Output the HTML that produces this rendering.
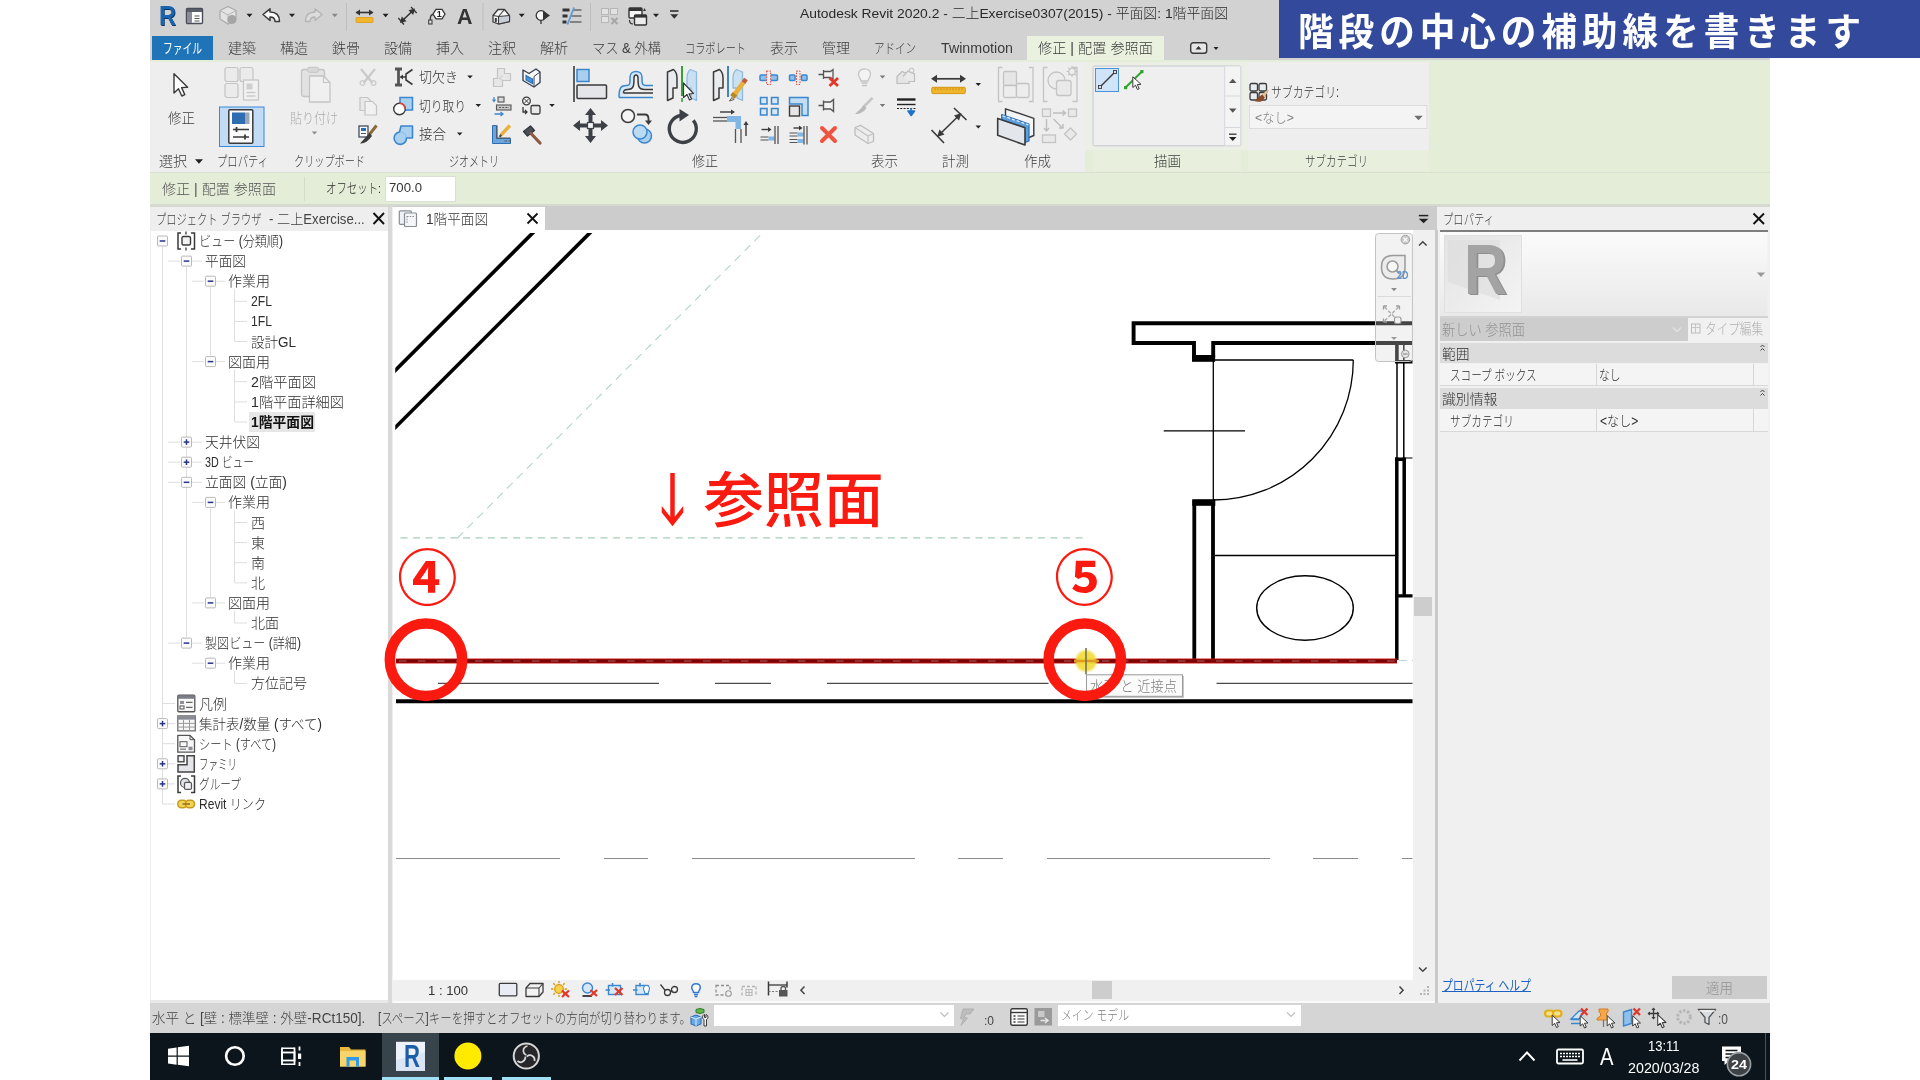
<!DOCTYPE html>
<html lang="ja"><head><meta charset="utf-8"><title>Autodesk Revit 2020.2</title>
<style>
html,body{margin:0;padding:0}
body{width:1920px;height:1080px;position:relative;overflow:hidden;background:#fff;font-family:"Liberation Sans","Noto Sans CJK JP",sans-serif;}
.r{position:absolute}
.t{position:absolute;white-space:nowrap;line-height:1;transform-origin:0 50%;color:#2b2b2b;font-weight:300}
.tl{position:absolute;left:0;top:0;width:1920px;height:1080px;will-change:transform}
.ov{position:absolute;left:0;top:0}
</style></head>
<body>
<div class="r" style="left:150px;top:0px;width:1620px;height:60px;background:#d2d2d2;"></div>
<div class="r" style="left:150px;top:60px;width:1620px;height:113px;background:#e4edd7;"></div>
<div class="r" style="left:150px;top:62px;width:935px;height:110.5px;background:#eeeeee;"></div>
<div class="r" style="left:1247.5px;top:62px;width:181.5px;height:88px;background:#eeeeee;"></div>
<div class="r" style="left:1085px;top:62px;width:162.5px;height:88px;background:#ebefe5;"></div>
<div class="r" style="left:1092.5px;top:150px;width:148.5px;height:21px;background:#e8f0dd;"></div>
<div class="r" style="left:1247.5px;top:150px;width:181.5px;height:21px;background:#e8f0dd;"></div>
<div class="r" style="left:150px;top:172px;width:1620px;height:1.5px;background:#d9dfd1;"></div>
<div class="r" style="left:150px;top:173px;width:1620px;height:32px;background:#e4edd7;"></div>
<div class="r" style="left:150px;top:204px;width:1620px;height:3px;background:#d6d9d0;"></div>
<div class="r" style="left:150px;top:206.5px;width:1620px;height:796px;background:#f0f0f0;"></div>
<div class="r" style="left:152px;top:36px;width:61px;height:24px;background:#1f74b8;"></div>
<div class="r" style="left:1027px;top:36px;width:137px;height:24px;background:#eaf1df;"></div>
<div class="r" style="left:1279px;top:0px;width:641px;height:57.5px;background:#33499b;"></div>
<div class="r" style="left:385px;top:175.5px;width:70.5px;height:26.5px;background:#ffffff;border:1px solid #dcdfd6;box-sizing:border-box;"></div>
<div class="r" style="left:304px;top:177px;width:1px;height:24px;background:#d3dcc6;"></div>
<div class="r" style="left:150px;top:206.5px;width:238.3px;height:24px;background:#eeeeee;"></div>
<div class="r" style="left:151.3px;top:230.5px;width:237px;height:770px;background:#ffffff;"></div>
<div class="r" style="left:150px;top:1000.3px;width:238.3px;height:2.7px;background:#e8e8e8;"></div>
<div class="r" style="left:388.3px;top:206.5px;width:4.2px;height:796px;background:#d9d9d9;"></div>
<div class="r" style="left:249px;top:411.96299999999997px;width:66px;height:20px;background:#e6e6e6;"></div>
<div class="r" style="left:392.5px;top:206px;width:1044.5px;height:23.5px;background:#cccccc;"></div>
<div class="r" style="left:393px;top:206.5px;width:151.5px;height:24px;background:#ffffff;"></div>
<div class="r" style="left:392.5px;top:230px;width:1020px;height:750px;background:#ffffff;"></div>
<div class="r" style="left:1412.5px;top:229.5px;width:23px;height:751px;background:#f0f0f0;"></div>
<div class="r" style="left:1414px;top:597px;width:18px;height:19px;background:#cdcdcd;"></div>
<div class="r" style="left:392.5px;top:980px;width:1043px;height:21px;background:#f0f0f0;"></div>
<div class="r" style="left:1092px;top:981px;width:20px;height:18px;background:#cdcdcd;"></div>
<div class="r" style="left:392.5px;top:1001px;width:1043px;height:2px;background:#fafafa;"></div>
<div class="r" style="left:1435.4px;top:229.5px;width:2.2px;height:773.5px;background:#c9c9c9;"></div>
<div class="r" style="left:1437.5px;top:206.5px;width:332.5px;height:796px;background:#f0f0f0;"></div>
<div class="r" style="left:1437.5px;top:206.5px;width:332.5px;height:23.5px;background:#efefef;"></div>
<div class="r" style="left:1440px;top:230px;width:327.5px;height:1.8px;background:#7e7e7e;"></div>
<div class="r" style="left:1440px;top:316px;width:327.5px;height:1.7px;background:#d2d2d2;"></div>
<div class="r" style="left:1440px;top:317.7px;width:247.7px;height:23.7px;background:#cdcdcd;"></div>
<div class="r" style="left:1687.7px;top:317.7px;width:80px;height:23.7px;background:#f1f1f1;"></div>
<div class="r" style="left:1440px;top:342.7px;width:327.5px;height:20.8px;background:#dcdcdc;"></div>
<div class="r" style="left:1440px;top:363.5px;width:327.5px;height:22.7px;background:#f4f4f4;border-bottom:1px solid #d8d8d8;box-sizing:border-box;"></div>
<div class="r" style="left:1440px;top:387.5px;width:327.5px;height:21.5px;background:#dcdcdc;"></div>
<div class="r" style="left:1440px;top:409px;width:327.5px;height:22.8px;background:#f4f4f4;border-bottom:1px solid #d8d8d8;box-sizing:border-box;"></div>
<div class="r" style="left:1596px;top:363.5px;width:1px;height:22.7px;background:#d6d6d6;"></div>
<div class="r" style="left:1596px;top:409px;width:1px;height:22.8px;background:#d6d6d6;"></div>
<div class="r" style="left:1753px;top:363.5px;width:1px;height:22.7px;background:#d6d6d6;"></div>
<div class="r" style="left:1753px;top:409px;width:1px;height:22.8px;background:#d6d6d6;"></div>
<div class="r" style="left:1672px;top:976px;width:95px;height:23px;background:#cccccc;"></div>
<div class="r" style="left:150px;top:1003px;width:1620px;height:30px;background:#d5d5d5;"></div>
<div class="r" style="left:714px;top:1005px;width:240px;height:21px;background:#ffffff;"></div>
<div class="r" style="left:1058px;top:1005px;width:243px;height:21px;background:#ffffff;"></div>
<div class="r" style="left:150px;top:1032.5px;width:1620px;height:47.5px;background:#0b151b;"></div>
<div class="r" style="left:382px;top:1032.5px;width:57px;height:47.5px;background:#37444b;"></div>
<div class="r" style="left:382px;top:1077.4px;width:57px;height:3px;background:#9fe0f5;"></div>
<div class="r" style="left:444px;top:1077.4px;width:48px;height:3px;background:#9fe0f5;"></div>
<div class="r" style="left:502px;top:1077.4px;width:49px;height:3px;background:#9fe0f5;"></div>
<div class="r" style="left:1765px;top:1033px;width:1px;height:47px;background:#46545b;"></div>
<svg class="ov" width="1920" height="1080" viewBox="0 0 1920 1080">
<defs><clipPath id="cv"><rect x="395.250" y="233" width="1017.25" height="746"/></clipPath></defs>
<g clip-path="url(#cv)" fill="none" stroke="#000">
<path d="M390 375.650 L540 225.650 M390 432.750 L600 222.750" stroke-width="3.7"/>
<path d="M457.500 538 L765 230.500" stroke="#b4d6c2" stroke-width="1.1" stroke-dasharray="8 6"/>
<path d="M400.500 537.900 H1085.500" stroke="#a6cfb6" stroke-width="1.1" stroke-dasharray="7 5.500"/>
<path d="M438 683.400 H659 M715 683.400 H771 M827 683.400 H1048.500 M1216.500 683.400 H1413" stroke="#4c4c4c" stroke-width="1.2"/>
<path d="M396 701.300 H1413" stroke-width="4"/>
<path d="M396 858.500 H560 M604 858.500 H648 M692 858.500 H915 M958 858.500 H1003 M1047 858.500 H1270 M1313 858.500 H1358 M1402 858.500 H1413" stroke="#8c8c8c" stroke-width="1.1"/>
<path d="M1413 323.300 H1133.600 V343 H1194 V358 M1213.200 358 V343 H1413" stroke-width="3.9" stroke-linejoin="miter"/>
<rect x="1192" y="355" width="23.100" height="6.800" fill="#000" stroke="none"/>
<path d="M1213.300 360 V500 M1213 360 H1353.300 M1353.300 360 A140 140 0 0 1 1213.300 500 M1163.700 430.800 H1245" stroke-width="1.3"/>
<rect x="1192.300" y="499.200" width="23" height="6.600" fill="#000" stroke="none"/>
<path d="M1194.300 500 V660 M1213 500 V660" stroke-width="3.800"/>
<path d="M1397 345 V458 M1403.800 345 V458" stroke-width="1.5"/>
<path d="M1396.900 343 V362 M1395 361.700 H1413 " stroke-width="3.600"/>
<path d="M1396.800 457.500 V660 M1404.200 457.500 V596" stroke-width="3.500"/>
<path d="M1395 459.300 H1406" stroke-width="3.600"/>
<path d="M1406 458 H1413" stroke-width="1.200"/>
<path d="M1395 595.900 H1413" stroke-width="3.400"/>
<path d="M1215 555.500 H1395" stroke-width="1.400"/>
<ellipse cx="1305" cy="608" rx="48.300" ry="32.200" stroke-width="1.400"/>
</g>
<rect x="1375.500" y="233.500" width="37" height="128" rx="3" fill="#d8d8d8" fill-opacity=".32" stroke="#c4c4c4" stroke-width="1"/>
<path d="M396 661 H1397" stroke="#d21c1c" stroke-width="5" fill="none"/>
<path d="M396 661 H1397" stroke="#7c0404" stroke-width="3.600" fill="none"/>
<path d="M399 661 H1397" stroke="#a86060" stroke-width="1.100" stroke-dasharray="7.500 11.500" fill="none"/>
<path d="M1399 660.500 H1413" stroke="#b5d5ea" stroke-width="1" stroke-dasharray="8 5" fill="none"/>
<defs><radialGradient id="yg"><stop offset="0" stop-color="#f2dc3a"/><stop offset=".72" stop-color="#f2dc3a" stop-opacity=".9"/><stop offset="1" stop-color="#f6e878" stop-opacity="0"/></radialGradient></defs>
<circle cx="1086" cy="661" r="12.500" fill="url(#yg)"/>
<path d="M1074 661 H1099" stroke="#e09a20" stroke-width="2.200" fill="none"/>
<path d="M1086 648 V674.500" stroke="#6b6b55" stroke-width="1.500" fill="none"/>
<rect x="1088" y="676" width="96" height="22" fill="#c8c8c8"/>
<rect x="1086.500" y="674.800" width="96" height="21.500" fill="#fbfbfb" stroke="#9a9a9a" stroke-width="1"/>
</svg>
<svg class="ov" width="1920" height="1080" viewBox="0 0 1920 1080" fill="none">
<g transform="translate(186 8)" ><rect x=".5" y=".5" width="16" height="15" rx="1" fill="#fdfdfd" stroke="#4a4c58" stroke-width="1.4"/><rect x="1" y="1" width="15" height="3" fill="#5a5d6a"/><rect x="1" y="4" width="5" height="11" fill="#8a8d98"/><path d="M8.500 8 h5 M8.500 10.500 h5 M8.500 13 h5" stroke="#555" stroke-width="1"/></g>
<g transform="translate(219 6)" ><path d="M9 .5 L17 4.500 V13 L9 18 L1 13 V4.500 Z" fill="#e3e3e3" stroke="#a9a9a9" stroke-width="1.200"/><path d="M1 4.500 L9 9 L17 4.500 M9 9 V18" stroke="#b5b5b5" stroke-width="1" fill="none"/><circle cx="13" cy="13.500" r="4.500" fill="#a5a5a5"/></g>
<path d="M246.5 13.75 h6 l-3.0 3.5 z" fill="#222"/>
<g transform="translate(262 8)" ><path d="M1 6.500 L8 .8 V4 C14 4 17.500 7 17.500 13.500 H13 C13 10 11.500 9 8 9 V12.500 Z" fill="#fafafa" stroke="#3a3a3a" stroke-width="1.500" stroke-linejoin="round"/></g>
<path d="M289.0 13.75 h6 l-3.0 3.5 z" fill="#222"/>
<g transform="translate(305 8)" ><path d="M17 6.500 L10 .8 V4 C4 4 .5 7 .5 13.500 H5 C5 10 6.500 9 10 9 V12.500 Z" fill="#dcdcdc" stroke="#b4b4b4" stroke-width="1.400" stroke-linejoin="round"/></g>
<path d="M331.8 13.75 h6 l-3.0 3.5 z" fill="#8a8a8a"/>
<path d="M346.500 3 V31" stroke="#bdbdbd" stroke-width="1"/>
<g transform="translate(355.5 9)" ><path d="M1 3.500 H17" stroke="#333" stroke-width="1.600"/><path d="M0 3.500 L4.500 .5 V6.500 Z M18 3.500 L13.500 .5 V6.500 Z" fill="#333"/><rect x=".5" y="8.500" width="17" height="5" rx="1" fill="#f2b52c" stroke="#d99a14" stroke-width=".8"/></g>
<path d="M382.6 13.75 h6 l-3.0 3.5 z" fill="#222"/>
<g transform="translate(397.5 6.5)" ><path d="M4 15 L16 3.500" stroke="#333" stroke-width="1.600"/><path d="M.8 11.500 L6.500 18 M13.500 .5 L19.200 6.500" stroke="#333" stroke-width="1.300"/><path d="M2.500 16.500 L4.300 10 L9 14.700 Z M17.500 2 L15.700 8.500 L11 3.800 Z" fill="#333"/></g>
<g transform="translate(427.5 8)" ><path d="M5.500 6 L8.500 1.300 H14.500 L17.500 6 L14.500 10.800 H8.500 Z" fill="#fdfdfd" stroke="#333" stroke-width="1.300"/><path d="M5.500 6.500 C3.500 6.500 2.800 8 2.800 12" stroke="#333" stroke-width="1.300" fill="none"/><rect x="1.200" y="12" width="3.300" height="4" fill="#ddd" stroke="#333" stroke-width="1"/></g>
<path d="M483 3 V31" stroke="#bdbdbd" stroke-width="1"/>
<g transform="translate(492 8.5)" ><path d="M1 7 L6 1 L12.500 1 L17.500 7 V13 L6.500 15.500 L1 13.500 Z" fill="#f7f7f7" stroke="#3a3a3a" stroke-width="1.300" stroke-linejoin="round"/><path d="M6.500 8 L17.500 7 V13 L6.500 15.500 Z" fill="#c9cfd6" stroke="#3a3a3a" stroke-width="1"/><path d="M1 7 L6.500 8 L12.500 1 M6.500 8 V15.500" stroke="#3a3a3a" stroke-width="1.100" fill="none"/><rect x="2.800" y="9.500" width="2" height="4" fill="#3a3a3a"/></g>
<path d="M518.7 13.75 h6 l-3.0 3.5 z" fill="#222"/>
<g transform="translate(535 9)" ><circle cx="6" cy="6.500" r="4.800" fill="#f6f6f6" stroke="#333" stroke-width="1.300"/><path d="M8 1.500 L15 6.500 L8 11.500 Z" fill="#333"/><path d="M6 11.500 V15" stroke="#333" stroke-width="1.300"/></g>
<g transform="translate(562.5 8.5)" ><path d="M0 1.500 H7 M0 7.500 H5 M0 13.500 H4" stroke="#333" stroke-width="3"/><path d="M11 1.500 H19 M9 7.500 H19 M7.500 13.500 H19" stroke="#333" stroke-width="1.200"/><path d="M11.500 -1 L5 16" stroke="#5b9bd8" stroke-width="1.800"/></g>
<path d="M590.500 3 V31" stroke="#bdbdbd" stroke-width="1"/>
<g transform="translate(601 8)" ><rect x=".5" y=".5" width="7" height="6" fill="#e2e2e2" stroke="#b6b6b6"/><rect x="9.500" y=".5" width="7" height="6" fill="#e2e2e2" stroke="#b6b6b6"/><rect x=".5" y="8.500" width="7" height="6" fill="#e2e2e2" stroke="#b6b6b6"/><path d="M10.500 10 L16.500 16 M16.500 10 L10.500 16" stroke="#a6a6a6" stroke-width="2"/></g>
<g transform="translate(628 7)" ><rect x="1" y="1" width="13" height="10" rx="1" fill="#f4f4f4" stroke="#333" stroke-width="1.400"/><rect x="1" y="1" width="13" height="3" fill="#333"/><rect x="6.500" y="8" width="12" height="10" rx="1" fill="#ececec" stroke="#333" stroke-width="1.400"/><rect x="6.500" y="8" width="12" height="2.600" fill="#333"/><path d="M1.500 13 C1.500 16 3 17 5 17" stroke="#333" stroke-width="1.200" fill="none"/><path d="M16.500 1 l1.500 3 h-3 z" fill="#333"/></g>
<path d="M653.0 13.75 h6 l-3.0 3.5 z" fill="#222"/>
<path d="M670 11 h8.500" stroke="#333" stroke-width="1.600"/>
<path d="M670.3 14.25 h8 l-4.0 4.5 z" fill="#333"/>
<g transform="translate(1190 42)" ><rect x=".7" y=".7" width="16" height="10.500" rx="2.500" fill="#e6e6e6" stroke="#3a3a3a" stroke-width="1.400"/><path d="M5.500 7.500 h6 l-3 -3.500 z" fill="#333"/></g>
<path d="M1213.5 47.0 h5 l-2.5 3 z" fill="#222"/>
<g transform="translate(173 73)" ><path d="M1 .8 V20 L5.500 15.800 L8.800 23 L11.800 21.600 L8.600 14.600 L14.600 14.200 Z" fill="#fff" stroke="#3a3a3a" stroke-width="1.400" stroke-linejoin="round"/></g>
<path d="M195.0 159.25 h8 l-4.0 4.5 z" fill="#222"/>
<g transform="translate(224 66.5)" ><g fill="#ebebeb" stroke="#c4c4c4" stroke-width="1.200"><rect x="1" y="1" width="13" height="14" rx="2"/><rect x="16" y="1" width="13" height="14" rx="2"/><rect x="1" y="17" width="13" height="14" rx="2"/><rect x="19.500" y="13.500" width="15" height="20" fill="#f1f1f1"/></g><rect x="22.500" y="17" width="6" height="6" fill="#cfcfcf"/><path d="M22.500 26 h9 M22.500 29.500 h9" stroke="#cacaca" stroke-width="1.300"/></g>
<rect x="219.500" y="107" width="44.500" height="39.500" fill="#c3dcf5" stroke="#3a88d8" stroke-width="1"/>
<g transform="translate(228 109)" ><rect x=".8" y=".8" width="24" height="33.500" rx="1" fill="#fbfbfb" stroke="#3a3a3a" stroke-width="1.500"/><rect x="4" y="3.500" width="13" height="11.500" fill="#2f6db3"/><rect x="17" y="3.500" width="4.500" height="11.500" fill="#9ea6b3"/><path d="M5 20.500 h16 M5 28 h16" stroke="#3a3a3a" stroke-width="1.400"/><path d="M8.500 18 v5 M17 25.500 v5" stroke="#3a3a3a" stroke-width="1.800"/></g>
<g transform="translate(300.5 66.5)" ><rect x="1" y="3" width="23" height="27" rx="2.500" fill="#e2e2e2" stroke="#c4c4c4" stroke-width="1.300"/><rect x="7" y=".8" width="11" height="5" rx="2" fill="#d8d8d8" stroke="#c4c4c4"/><path d="M9 9.500 H23 L29.500 16 V35.500 H9 Z" fill="#f0f0f0" stroke="#c4c4c4" stroke-width="1.300"/><path d="M23 9.500 V16 H29.500" stroke="#c4c4c4" stroke-width="1.100"/></g>
<path d="M311.75 131.4 h5.5 l-2.75 3.2 z" fill="#8d8d8d"/>
<g transform="translate(359 68)" ><path d="M2 1 L13.500 15 M16 1 L4.500 15" stroke="#c9c9c9" stroke-width="2.200"/><circle cx="3.500" cy="15" r="2.300" stroke="#cdcdcd" stroke-width="1.300"/><circle cx="14.500" cy="15" r="2.300" stroke="#cdcdcd" stroke-width="1.300"/></g>
<g transform="translate(359 96.5)" ><path d="M1 1 H8.500 L12 4.500 V14 H1 Z" fill="#e9e9e9" stroke="#c4c4c4" stroke-width="1.200"/><path d="M6 5 H13.500 L17.500 9 V18.500 H6 Z" fill="#f1f1f1" stroke="#c4c4c4" stroke-width="1.200"/></g>
<g transform="translate(358 125)" ><rect x="1" y="1" width="9" height="11" fill="#f5f8fc" stroke="#444c5c" stroke-width="1.300"/><rect x="3" y="3" width="5" height="3" fill="#2f6db3"/><path d="M3 8.500 h5" stroke="#555" stroke-width="1"/><path d="M18.500 .5 L11 10" stroke="#8a6a3a" stroke-width="3"/><path d="M11.500 8 L2 18.500 C6 19 10 16.500 14 11 Z" fill="#3b3b3b"/></g>
<g transform="translate(393 67.5)" ><path d="M2 1.500 H9 M2 17.500 H9 M5.500 1.500 V17.500" stroke="#555" stroke-width="2.800"/><path d="M19.500 2 L13 6.500 V12.500 L19.500 17 M13 9.500 H8" stroke="#3a3a3a" stroke-width="1.600"/><path d="M6.500 9.500 L10 7 V12 Z" fill="#3a3a3a"/></g>
<g transform="translate(393 96.5)" ><rect x="7" y="1" width="12.500" height="12.500" fill="#a9d0ef" stroke="#3b87cf" stroke-width="1.500"/><circle cx="6.500" cy="12.500" r="5.800" fill="#fdfdfd" stroke="#3a3a3a" stroke-width="1.400"/><path d="M6.500 6.700 A5.800 5.800 0 0 1 12.300 12.500" stroke="#e0463a" stroke-width="1.600"/></g>
<g transform="translate(393 125)" ><path d="M8 1 H19.500 V13 H13.500 A6.200 6.200 0 1 1 6.500 7 Z" fill="#a9d0ef" stroke="#3b87cf" stroke-width="1.600" stroke-linejoin="round"/><path d="M8 7 A6 6 0 0 1 13 12.500" stroke="#8bb9e2" stroke-width="1"/></g>
<path d="M467.25 75.4 h5.5 l-2.75 3.2 z" fill="#222"/>
<path d="M475.55 103.9 h5.5 l-2.75 3.2 z" fill="#222"/>
<path d="M456.95 132.4 h5.5 l-2.75 3.2 z" fill="#222"/>
<g transform="translate(491.5 67.5)" ><path d="M6 1 H13 V6 H19 V13 H11 V19 H2 V11 H6 Z" fill="#e6e6e6" stroke="#c4c4c4" stroke-width="1.200"/><path d="M11 8 L8 11 L11 13" stroke="#d2d2d2" stroke-width="1.200"/></g>
<g transform="translate(491.5 96)" ><rect x="6.500" y="1" width="6" height="5" fill="#d9d9d9" stroke="#555" stroke-width="1.100"/><rect x="5" y="9" width="14.500" height="5" fill="#c9c9c9" stroke="#555" stroke-width="1.100"/><path d="M7.500 11.500 h10" stroke="#555" stroke-width="1" stroke-dasharray="2 1.200"/><path d="M2.500 1 V5 M1 3.500 L2.500 5.500 L4 3.500" stroke="#3b87cf" stroke-width="1.200"/><path d="M3 18 H11 M9 16 L11.500 18 L9 20" stroke="#3b87cf" stroke-width="1.300"/></g>
<g transform="translate(491.5 124.5)" ><path d="M1 1 H5 V14 H19 V19 H1 Z" fill="#6aa5dc" stroke="#2f6db3" stroke-width="1"/><path d="M5.500 1 V13.500 H19" stroke="#555" stroke-width="1.200"/><path d="M13 16.500 h6.500" stroke="#555" stroke-width="1.100" stroke-dasharray="2.500 1.500"/><path d="M18.500 1 L9.500 10.500" stroke="#e9b13a" stroke-width="3.400"/><path d="M9.800 10.200 L8 12.500" stroke="#555" stroke-width="2.200"/></g>
<g transform="translate(521.5 67.5)" ><path d="M1.500 2.500 L7.500 6 L14.500 1.500 L18.500 4.500 V15 L12.500 19.500 L1.500 13 Z" fill="#f6f7f9" stroke="#3c4350" stroke-width="1.400" stroke-linejoin="round"/><path d="M4.500 8 L11 11.500 V16 L4.500 12.500 Z" fill="#4a93dc" stroke="#2f6db3" stroke-width="1.100"/><path d="M12.500 19.500 V9 L18.500 4.500" stroke="#3c4350" stroke-width="1" fill="none"/></g>
<g transform="translate(521.5 96.5)" ><circle cx="5" cy="4.500" r="3.800" stroke="#3a3a3a" stroke-width="1.300" fill="#f4f4f4"/><path d="M2.500 2 L7.500 7 M7.500 2 L2.500 7" stroke="#3a3a3a" stroke-width="1"/><rect x="9.500" y="9" width="9" height="8.500" rx="1.500" fill="#e9e9e9" stroke="#3a3a3a" stroke-width="1.300"/><path d="M1.500 10.500 V15.500 H5 M3.500 13.500 L5.500 15.500 L3.500 17.500" stroke="#3a3a3a" stroke-width="1.300"/></g>
<path d="M549.25 103.9 h5.5 l-2.75 3.2 z" fill="#222"/>
<g transform="translate(521.5 125)" ><path d="M2 6.500 L9 1 L13 5.500 L6 11 Z" fill="#4b4f58" stroke="#33363d" stroke-width="1.300" stroke-linejoin="round"/><path d="M9.500 8.500 L18.500 18" stroke="#8a5a44" stroke-width="3.200" stroke-linecap="round"/></g>
<g transform="translate(572.5 66)" ><path d="M1.500 0 V36" stroke="#3a3a3a" stroke-width="1.600"/><rect x="4.500" y="3.500" width="12" height="12" fill="#a9d0ef" stroke="#3b87cf" stroke-width="1.500"/><rect x="4.500" y="19" width="29.500" height="13.500" rx="1" fill="#e3e5e8" stroke="#3a3a3a" stroke-width="1.500"/></g>
<g transform="translate(617.5 68)" ><path d="M1.500 29.500 H35.500 M1.500 29.500 C1.500 19 4 17.500 9 17.500 C13 17.500 12.500 15 12.500 9 C12.500 1.500 24.500 1.500 24.500 9 C24.500 15 24 17.500 29 17.500 H35.500" stroke="#3b87cf" stroke-width="1.500" fill="#d6e8f7"/><path d="M6 25 H35.500 M6 25 C6 22 7 21.500 10 21.500 C16.500 21.500 16.500 17 16.500 10 C16.500 6 20.500 6 20.500 10 C20.500 17 20.500 21.500 27 21.500 H35.500" stroke="#3a3a3a" stroke-width="1.500" fill="#f2f2f2"/></g>
<g transform="translate(665.5 66)" ><path d="M2 6 L8 3.500 C11 6 11.500 9 11.500 12 V22 H7.500 V32 L2 34.500 Z" fill="#e9ebee" stroke="#3a3a3a" stroke-width="1.500" stroke-linejoin="round"/><path d="M31 6 L25 3.500 C22 6 21.500 9 21.500 12 V22 H25.500 V32 L31 34.500 Z" fill="#c9e0f3" stroke="#8fbbe0" stroke-width="1.300" stroke-linejoin="round"/><path d="M16.500 0 V30" stroke="#3aa03a" stroke-width="2"/><path d="M16.500 32 V36" stroke="#3aa03a" stroke-width="1.600"/><path d="M18 17 V31.500 L21.500 28.500 L24 34 L26 33 L23.500 27.800 L28 27.500 Z" fill="#fff" stroke="#3a3a3a" stroke-width="1.200" stroke-linejoin="round"/></g>
<g transform="translate(711.5 66)" ><path d="M2 6 L8 3.500 C11 6 11.500 9 11.500 12 V22 H7.500 V32 L2 34.500 Z" fill="#e9ebee" stroke="#3a3a3a" stroke-width="1.500" stroke-linejoin="round"/><path d="M31 6 L25 3.500 C22 6 21.500 9 21.500 12 V22 H25.500 V32 L31 34.500 Z" fill="#c9e0f3" stroke="#8fbbe0" stroke-width="1.300" stroke-linejoin="round"/><path d="M16.500 0 V31" stroke="#3b87cf" stroke-width="2"/><path d="M33 15 L21 31" stroke="#e9b13a" stroke-width="4.600"/><path d="M33 15 L21 31" stroke="#b8862a" stroke-width="5.600" stroke-dasharray="0 16 4 0"/><path d="M34.500 13 L32 16.500" stroke="#c05a40" stroke-width="4.500"/><path d="M20.500 31.500 L18 35 L22.500 33.500 Z" fill="#f7e7c0" stroke="#3a3a3a" stroke-width=".8"/></g>
<g transform="translate(573 108)" ><path d="M17.500 0 L23 7 H19.500 V15.500 H28 V12 L35 17.500 L28 23 V19.500 H19.500 V28 H23 L17.500 35 L12 28 H15.500 V19.500 H7 V23 L0 17.500 L7 12 V15.500 H15.500 V7 H12 Z" fill="#3d4046"/><rect x="14.500" y="14.500" width="6" height="6" fill="#f4f4f4" stroke="#3d4046" stroke-width="1.200"/></g>
<g transform="translate(620 108)" ><circle cx="8" cy="8" r="6.500" fill="#f5f5f5" stroke="#3a3a3a" stroke-width="1.500"/><path d="M17 6.500 H25 C28 6.500 28.500 8 28.500 11 V13" stroke="#3a3a3a" stroke-width="1.800"/><path d="M25 12.500 H32 L28.500 17 Z" fill="#3a3a3a"/><circle cx="24.500" cy="28" r="7" fill="#a9d0ef" stroke="#3b87cf" stroke-width="1.500"/><circle cx="20" cy="24" r="7" fill="#bcdaf2" stroke="#3b87cf" stroke-width="1.500"/></g>
<g transform="translate(667 109)" ><path d="M14 6.500 A13.500 13.500 0 1 0 26.300 11.400" stroke="#3d4046" stroke-width="3.400"/><path d="M12.500 0 L22 6 L12.500 12.500 Z" fill="#3d4046"/></g>
<g transform="translate(711 109)" ><path d="M2 8.500 H16" stroke="#555" stroke-width="1.300"/><path d="M2 12 H16" stroke="#555" stroke-width="1.300"/><path d="M16 7 H30 V20 H24.500 V13 H16 Z" fill="#7fb6e6"/><path d="M24.500 20 V34 M30 20 V34" stroke="#555" stroke-width="1.300"/><path d="M9 3 H22" stroke="#3a3a3a" stroke-width="1.400"/><path d="M20 .5 L24 3 L20 5.500 Z" fill="#3a3a3a"/><path d="M35 27 V14" stroke="#3a3a3a" stroke-width="1.400"/><path d="M32.500 16 L35 12 L37.500 16 Z" fill="#3a3a3a"/></g>
<g transform="translate(759 70)" ><rect x="1" y="5" width="17.500" height="5.500" rx="1" fill="#8fc1ec" stroke="#3b87cf" stroke-width="1.500"/><rect x="7.700" y="1" width="4" height="13.500" stroke="#e0463a" stroke-width="1" stroke-dasharray="1.600 1.200" fill="#eeeeee"/></g>
<g transform="translate(759.5 96.5)" ><g fill="#d6e8f7" stroke="#3b87cf" stroke-width="1.500"><rect x="1" y="1" width="6.500" height="6.500"/><rect x="12" y="1" width="6.500" height="6.500"/><rect x="1" y="12" width="6.500" height="6.500"/><rect x="12" y="12" width="6.500" height="6.500"/></g></g>
<g transform="translate(759.5 125)" ><path d="M2 4.500 H10" stroke="#3a3a3a" stroke-width="1.400"/><path d="M8.500 2 L12 4.500 L8.500 7 Z" fill="#3a3a3a"/><path d="M1 12 H9 M1 15 H9" stroke="#555" stroke-width="1.200"/><path d="M9 11.500 H15 V15.500 H9 Z" fill="#7fb6e6"/><path d="M15.500 1 V19 M18.500 1 V19" stroke="#555" stroke-width="1.300"/></g>
<g transform="translate(788.5 70)" ><rect x="1" y="5" width="5.500" height="5.500" rx="1" fill="#8fc1ec" stroke="#3b87cf" stroke-width="1.500"/><rect x="13" y="5" width="5.500" height="5.500" rx="1" fill="#8fc1ec" stroke="#3b87cf" stroke-width="1.500"/><rect x="8" y="1" width="3.500" height="13.500" stroke="#e0463a" stroke-width="1" stroke-dasharray="1.600 1.200"/></g>
<g transform="translate(788.5 96.5)" ><path d="M1 1 H19.500 V19 H13.500 V7.500 H1 Z" fill="#c3ddf3" stroke="#3b87cf" stroke-width="1.500"/><rect x="1" y="9.500" width="10" height="10" fill="#e6e6e6" stroke="#3a3a3a" stroke-width="1.400"/></g>
<g transform="translate(788.5 125)" ><path d="M5 3 H12" stroke="#3a3a3a" stroke-width="1.400"/><path d="M10.500 .5 L14 3 L10.500 5.500 Z" fill="#3a3a3a"/><path d="M1 8 H9 M1 11 H9 M1 14.500 H9 M1 17.500 H9" stroke="#555" stroke-width="1.200"/><path d="M9 7.500 H15 V11.500 H9 Z M9 14 H15 V18 H9 Z" fill="#7fb6e6"/><path d="M15.500 1 V19.500 M18.500 1 V19.500" stroke="#555" stroke-width="1.300"/></g>
<g transform="translate(818.5 68.5)" ><path d="M0 6 H5 M5 1.500 V10.500 M5 3 H12 L14.500 1 V11 L12 9 H5" stroke="#555" stroke-width="1.300" fill="#f2f2f2"/><path d="M11 9.500 L19.500 17.500 M19.500 9.500 L11 17.500" stroke="#e0392b" stroke-width="2.800"/></g>
<g transform="translate(818.5 97.5)" ><path d="M0 8 H5 M5 3 V13 M5 4.500 H12 L15 2 V14 L12 11.500 H5" stroke="#555" stroke-width="1.400" fill="#f2f2f2"/></g>
<g transform="translate(820.5 126.5)" ><path d="M1.500 1.500 L14.500 14.500 M14.500 1.500 L1.500 14.500" stroke="#ee5540" stroke-width="4" stroke-linecap="round"/></g>
<g transform="translate(857.5 68)" ><path d="M7 .8 C11 .8 13 3.500 13 6.500 C13 9.500 10.500 10.500 10.500 13 H3.500 C3.500 10.500 1 9.500 1 6.500 C1 3.500 3 .8 7 .8 Z" fill="#f3f3f3" stroke="#c4c4c4" stroke-width="1.300"/><path d="M4 15 H10 M4.500 17.500 H9.500" stroke="#c4c4c4" stroke-width="1.400"/></g>
<path d="M879.75 75.4 h5.5 l-2.75 3.2 z" fill="#777"/>
<g transform="translate(896 67.5)" ><path d="M1 9 L6 4 L13 7 V16 H1 Z" fill="#e4e4e4" stroke="#bdbdbd" stroke-width="1.200"/><path d="M7 9 L12 3.500 L18.500 6.500 V14 H13" stroke="#bdbdbd" stroke-width="1.200" fill="#eaeaea"/><circle cx="15.500" cy="3" r="2.300" stroke="#c4c4c4" stroke-width="1.100"/></g>
<g transform="translate(854 97)" ><path d="M18.500 .8 L9 10.500" stroke="#c6c6c6" stroke-width="2.600"/><path d="M10 8.500 L1 17 C5 17.500 9.500 15.500 12.500 11 Z" fill="#b9b9b9"/></g>
<path d="M879.75 103.9 h5.5 l-2.75 3.2 z" fill="#777"/>
<g transform="translate(896 98)" ><path d="M1 1.500 H19.500" stroke="#222" stroke-width="2.400"/><path d="M1 6.500 H19.500" stroke="#222" stroke-width="1.400"/><path d="M1 10.500 H19.500" stroke="#222" stroke-width="1" stroke-dasharray="2 1.300"/><path d="M15 10 V13.500 M12 13 H18.500 L15.200 17.500 Z" fill="#1e73c8" stroke="#1e73c8" stroke-width="1.600" stroke-linejoin="round"/></g>
<g transform="translate(854 124.5)" ><path d="M1 3 L6.500 .8 L19.500 9 V17 L14 19 L1 10.500 Z" fill="#ececec" stroke="#bdbdbd" stroke-width="1.300" stroke-linejoin="round"/><path d="M1 3 L14 11.500 L19.500 9 M14 11.500 V19" stroke="#c2c2c2" stroke-width="1.100"/></g>
<g transform="translate(931 72.8)" ><path d="M2 6 H33" stroke="#3a3a3a" stroke-width="1.700"/><path d="M0 6 L6 2 V10 Z M35 6 L29 2 V10 Z" fill="#3a3a3a"/><rect x=".8" y="14.500" width="33.500" height="6.300" rx="1" fill="#f0b52e" stroke="#d39812" stroke-width="1"/><path d="M4 15 v2.500 M7 15 v2 M10 15 v2.500 M13 15 v2 M16 15 v2.500 M19 15 v2 M22 15 v2.500 M25 15 v2 M28 15 v2.500 M31 15 v2" stroke="#c78d10" stroke-width=".9"/></g>
<path d="M975.55 82.9 h5.5 l-2.75 3.2 z" fill="#222"/>
<g transform="translate(931.5 108)" ><path d="M6.500 28 L29 6" stroke="#3a3a3a" stroke-width="1.600"/><path d="M0 22 L12.500 35 M22.500 0 L35 12" stroke="#3a3a3a" stroke-width="1.600"/><path d="M5.500 29 L8 21.500 L13 26.500 Z M30 5 L27.500 12.500 L22.500 7.500 Z" fill="#3a3a3a"/></g>
<path d="M975.55 125.4 h5.5 l-2.75 3.2 z" fill="#222"/>
<g transform="translate(997.5 66.5)" ><path d="M5 1 H1 V35 H5 M31.500 1 H35.500 V35 H31.500" stroke="#c4c4c4" stroke-width="1.300"/><rect x="6" y="5" width="13" height="14" rx="1.500" fill="#e6e6e6" stroke="#c4c4c4" stroke-width="1.300"/><rect x="6" y="19" width="13" height="12" rx="1.500" fill="#ededed" stroke="#c4c4c4" stroke-width="1.300"/><rect x="19" y="17" width="12.500" height="14" rx="1.500" fill="#ededed" stroke="#c4c4c4" stroke-width="1.300"/></g>
<g transform="translate(1042.5 66.5)" ><path d="M5 1 H1 V35 H5 M30 1 H34.500 V35 H30" stroke="#c4c4c4" stroke-width="1.300"/><circle cx="14" cy="14" r="8.500" fill="#ececec" stroke="#c4c4c4" stroke-width="1.300"/><rect x="14" y="14" width="14.500" height="15" rx="2" fill="#e9e9e9" stroke="#c4c4c4" stroke-width="1.300"/><circle cx="29.500" cy="5" r="3.300" stroke="#c4c4c4" stroke-width="1.300" fill="#eee"/><path d="M29.500 -.5 v2 M29.500 8.500 v2 M24 5 h2 M33 5 h2 M25.600 1.200 l1.400 1.400 M32 7.500 l1.400 1.400 M25.600 8.800 l1.400 -1.400 M32 2.600 l1.400 -1.400" stroke="#c4c4c4" stroke-width="1.100"/></g>
<g transform="translate(996.5 108)" ><path d="M9 .8 L37.300 10.400 V27.500 L32.500 29.500 L9 21 Z" fill="#f4f5f7" stroke="#3a3a3a" stroke-width="1.400" stroke-linejoin="round"/><path d="M5.200 6.500 L32.500 16 V33 L28.500 34.500 L5.200 26 Z" fill="#5b9fdf" stroke="#2f6db3" stroke-width="1.200" stroke-linejoin="round"/><path d="M6 7.800 L32 16.800" stroke="#d9ecfb" stroke-width="1.300" stroke-dasharray="3 2"/><path d="M1.200 10.400 L28.500 19.800 V37 L1.200 27.300 Z" fill="#e3e6ea" stroke="#3a3a3a" stroke-width="1.600" stroke-linejoin="round"/></g>
<g transform="translate(1041.5 108)" ><g stroke="#c4c4c4" stroke-width="1.300" fill="#e9e9e9"><rect x="1" y="1" width="8" height="7.500"/><rect x="27" y="1" width="8" height="7.500"/><rect x="1" y="27" width="13" height="7.500"/><path d="M29 20 L35 26 L29 32 L23 26 Z"/></g><path d="M11.500 5 H23 M21 2.500 L24 5 L21 7.500 M5 11 V22 M2.500 20 L5 23 L7.500 20 M12 11 L21 20 M17.500 20 H21.500 V16" stroke="#bdbdbd" stroke-width="1.400"/></g>
<rect x="1093" y="66" width="147.800" height="79.800" rx="1.500" fill="#efefef" stroke="#c5c7d0" stroke-width="1"/>
<rect x="1224.700" y="66.500" width="15.600" height="78.800" fill="#f4f4f4"/><path d="M1224.700 66.500 V145.300 M1224.700 96 H1240.300 M1224.700 127.500 H1240.300" stroke="#d5d7de" stroke-width="1"/>
<path d="M1229 83 h7.500 l-3.750 -4.200 z M1229 108.500 h7.500 l-3.750 4.200 z" fill="#555"/><path d="M1229 134.200 h7.500" stroke="#333" stroke-width="1.300"/><path d="M1229 137 h7.500 l-3.750 4 z" fill="#222"/>
<rect x="1095.500" y="68.500" width="23" height="23" fill="#cfe4f8" stroke="#4a93dc" stroke-width="1"/>
<path d="M1100 87 L1115 72" stroke="#3a3a3a" stroke-width="1.400"/><rect x="1098.500" y="85.500" width="3" height="3" fill="#ddd" stroke="#3a3a3a" stroke-width=".9"/><rect x="1113.500" y="70.500" width="3" height="3" fill="#ddd" stroke="#3a3a3a" stroke-width=".9"/>
<path d="M1125.500 87.500 L1142 71.500" stroke="#2fa52f" stroke-width="2"/><rect x="1124" y="86" width="3.200" height="3.200" fill="#2fa52f"/><rect x="1140.300" y="70" width="3.200" height="3.200" fill="#2fa52f"/>
<g transform="translate(1132 76)" ><path d="M.8 .8 V11.500 L3.500 9.200 L5.400 13.500 L7.200 12.700 L5.300 8.500 L9 8.300 Z" fill="#fff" stroke="#3a3a3a" stroke-width="1" stroke-linejoin="round"/></g>
<g transform="translate(1249 82.5)" ><g fill="#e9ecef" stroke="#3a3a3a" stroke-width="1.300"><rect x="1" y="1" width="7.500" height="7.500" rx="1.500"/><rect x="10" y="1" width="7.500" height="7.500" rx="1.500"/><rect x="1" y="10" width="7.500" height="7.500" rx="1.500"/><rect x="10" y="10" width="7.500" height="7.500" rx="1.500"/></g><path d="M19.500 7.500 L11 13.500 C9 15 8.500 17.500 5 18.500 C9 20 13.500 19.500 15 16.500 Z" fill="#8c4a2a"/><path d="M19.800 7 L13 11.500 L15.500 15 Z" fill="#e6c49a"/></g>
<rect x="1249.500" y="105.500" width="177.500" height="23" fill="#f4f4f4" stroke="#dcdcdc" stroke-width="1"/>
<path d="M1414.25 115.75 h8.5 l-4.25 4.5 z" fill="#707070"/>
<g transform="translate(168 1046)" ><path d="M0 2.800 L8.600 1.500 V9.500 H0 Z M9.800 1.300 L21 -.3 V9.500 H9.800 Z M0 10.700 H8.600 V18.700 L0 17.500 Z M9.800 10.700 H21 V20.300 L9.800 18.800 Z" fill="#ffffff"/></g>
<circle cx="234.900" cy="1056" r="8.800" stroke="#ffffff" stroke-width="2.600"/>
<g transform="translate(281 1046.5)" ><path d="M1 1 V18.500 M13.500 1 V18.500" stroke="#fff" stroke-width="1.800"/><path d="M1 1.800 H13.500 M1 17.800 H13.500" stroke="#fff" stroke-width="1.600"/><rect x="1" y="6" width="12.500" height="8" stroke="#fff" stroke-width="1.800"/><path d="M18.500 0 V4 M18.500 15.500 V19.500" stroke="#fff" stroke-width="1.800"/><rect x="17" y="7" width="3.200" height="5.500" fill="#fff"/></g>
<g transform="translate(340 1045)" ><path d="M0 2 H9 L11 4.500 H25.500 V21.500 H0 Z" fill="#e9b93f"/><path d="M0 6 H25.500 V21.500 H0 Z" fill="#f7d56a"/><path d="M6.500 12 H19 V21.500 H6.500 Z" fill="#2f9be6"/><path d="M9.500 15.500 H16 V21.500 H9.500 Z" fill="#f7d56a"/></g>
<rect x="396" y="1041.800" width="29" height="29" fill="#eef3fb"/><path d="M396 1060 L425 1052 V1070.800 H396 Z" fill="#dbe6f5"/>
<circle cx="467.900" cy="1056" r="13.500" fill="#ffea00"/>
<circle cx="526.300" cy="1056" r="12.600" fill="#26272b" stroke="#d5d5d5" stroke-width="2"/>
<g stroke="#d9d9d9" stroke-width="1.700" fill="none"><path d="M526.300 1055 C522 1053 522.500 1047 527.500 1046"/><path d="M526.800 1056.500 C530.500 1053.500 535.500 1056.500 534.500 1061"/><path d="M525.500 1056.500 C525.500 1061 521 1064 517.500 1061"/></g>
<path d="M1519.500 1060.500 L1527 1052.500 L1534.500 1060.500" stroke="#fff" stroke-width="1.900"/>
<g transform="translate(1556 1048.5)" ><rect x="1" y="1" width="26" height="14" rx="1.500" stroke="#fff" stroke-width="1.800"/><path d="M4 5 h20 M4 8 h20" stroke="#fff" stroke-width="1.500" stroke-dasharray="2 1"/><path d="M6.500 11.500 h15" stroke="#fff" stroke-width="1.600"/></g>
<g transform="translate(1721 1046.5)" ><path d="M1 0 H20 V14.500 H8 L3.500 18.500 V14.500 H1 Z" fill="#fff"/><path d="M4.500 4 H16.500 M4.500 7.500 H16.500 M4.500 11 H12" stroke="#0b151b" stroke-width="1.300"/></g>
<circle cx="1739" cy="1064.200" r="11.600" fill="#3c4246" stroke="#9aa0a4" stroke-width="1.600"/>
<g transform="translate(690 1008)" ><path d="M6 1.500 L10 .5 L14 1.500 V4.500 L10 5.500 L6 4.500 Z" fill="#5fb84a" stroke="#2d7a25" stroke-width="1"/><path d="M1 9 L6 7 L11 9 V16 L6 18 L1 16 Z" fill="#6aa9e3" stroke="#2f6db3" stroke-width="1.100"/><path d="M1 9 L6 11 L11 9 M6 11 V18" stroke="#dcecf9" stroke-width="1"/><path d="M14.500 6.500 C12 7 12 11 14 11.500 V18 H16.500 V11.500 C18.500 11 18.500 7 16 6.500 V9.500 H14.500 Z" fill="#f4f4f4" stroke="#3a3a3a" stroke-width="1"/></g>
<path d="M940.500 1012.500 l4 4 l4 -4" stroke="#bdbdbd" stroke-width="1.200"/>
<path d="M1287 1012.500 l4 4 l4 -4" stroke="#bdbdbd" stroke-width="1.200"/>
<g transform="translate(959 1008)" ><path d="M4 1 H15 L11 6 H7 L5 9.500 L8.500 10 L2 17.500 L4.500 11 L1.500 10.500 Z" fill="#bdbdbd" stroke="#a9a9a9" stroke-width=".8"/></g>
<g transform="translate(1010 1008)" ><rect x=".8" y=".8" width="16.500" height="16.500" rx="1.500" fill="#fbfbfb" stroke="#3a3a3a" stroke-width="1.400"/><path d="M.8 4.500 H17.300" stroke="#3a3a3a" stroke-width="1.400"/><path d="M3.500 8 h2 M3.500 11 h2 M3.500 14 h2" stroke="#3a3a3a" stroke-width="1.500"/><path d="M7.500 8 h7 M7.500 11 h7 M7.500 14 h7" stroke="#3a3a3a" stroke-width="1.200"/></g>
<g transform="translate(1034.5 1008)" ><rect x="0" y="0" width="17.500" height="17.500" fill="#9a9a9a"/><path d="M3.500 3 H10 V9 H3.500 Z" fill="#c9c9c9"/><path d="M6 12.500 H12.500 M10.500 10 L13.500 12.500 L10.500 15" stroke="#e6e6e6" stroke-width="1.500"/></g>
<g transform="translate(1544 1009)" ><rect x="1" y="1.500" width="8.500" height="6" rx="3" stroke="#e0b020" stroke-width="2.200" fill="#f7e08a"/><rect x="9" y="1.500" width="8.500" height="6" rx="3" stroke="#e0b020" stroke-width="2.200" fill="#f7e08a"/><g transform="translate(7.500 5.500)"><path d="M.7 .7 V11 L3.200 8.800 L5 13 L6.800 12.200 L5 8.200 L8.500 8 Z" fill="#fff" stroke="#3a3a3a" stroke-width="1" stroke-linejoin="round"/></g></g>
<g transform="translate(1570 1008)" ><path d="M1 11 L9 3 H15 L9 11 Z" fill="#cfe4f8" stroke="#3b87cf" stroke-width="1.300"/><path d="M1 15.500 H10 M1 11.500 H9" stroke="#3b87cf" stroke-width="1.600"/><path d="M11 .5 L17.500 7 M17.500 .5 L11 7" stroke="#e0392b" stroke-width="2.300"/><g transform="translate(9.500 7)"><path d="M.7 .7 V11 L3.200 8.800 L5 13 L6.800 12.200 L5 8.200 L8.500 8 Z" fill="#fff" stroke="#3a3a3a" stroke-width="1" stroke-linejoin="round"/></g></g>
<g transform="translate(1596 1008)" ><path d="M3 1 H12 V4 L10.500 5 V8 L14 10.500 V12 H1 V10.500 L4.500 8 V5 L3 4 Z" fill="#f4a64a" stroke="#d97c1e" stroke-width="1"/><path d="M7.500 12 V19" stroke="#777" stroke-width="1.300"/><g transform="translate(10.500 7)"><path d="M.7 .7 V11 L3.200 8.800 L5 13 L6.800 12.200 L5 8.200 L8.500 8 Z" fill="#fff" stroke="#3a3a3a" stroke-width="1" stroke-linejoin="round"/></g></g>
<g transform="translate(1622.5 1008)" ><path d="M1 4 L9 1.500 V15.500 L1 18 Z" fill="#8ec0ec" stroke="#3b87cf" stroke-width="1.400"/><path d="M11 .5 L17.500 7 M17.500 .5 L11 7" stroke="#e0392b" stroke-width="2.300"/><g transform="translate(9.500 7)"><path d="M.7 .7 V11 L3.200 8.800 L5 13 L6.800 12.200 L5 8.200 L8.500 8 Z" fill="#fff" stroke="#3a3a3a" stroke-width="1" stroke-linejoin="round"/></g></g>
<g transform="translate(1648 1008)" ><path d="M5.500 0 V11 M0 5.500 H11" stroke="#3a3a3a" stroke-width="1.300"/><path d="M5.500 -.5 l2 2.500 h-4 z M5.500 11.500 l2 -2.500 h-4 z M-.5 5.500 l2.500 -2 v4 z M11.500 5.500 l-2.500 -2 v4 z" fill="#3a3a3a"/><g transform="translate(9 6) scale(1.050)"><path d="M.7 .7 V11 L3.200 8.800 L5 13 L6.800 12.200 L5 8.200 L8.500 8 Z" fill="#fff" stroke="#3a3a3a" stroke-width="1" stroke-linejoin="round"/></g></g>
<circle cx="1684" cy="1017" r="6.300" stroke="#b4b4b4" stroke-width="3" stroke-dasharray="2.300 1.700"/>
<g transform="translate(1697.5 1008.5)" ><path d="M.8 .8 H18.200 L11.500 9 V16 L7.500 14 V9 Z" fill="#d9dde2" stroke="#555" stroke-width="1.300" stroke-linejoin="round"/><path d="M1.500 2.500 H17.500" stroke="#f6f6f6" stroke-width="1.200"/></g>
<path d="M162.500 247.0 V804.0 M186.500 267.1 V637.1 M210.500 287.2 V355.6 M210.500 508.4 V596.9 M210.500 669.2 V657.2 M234.500 289.2 V341.5 M234.500 369.6 V422.0 M234.500 510.4 V582.8 M234.500 610.9 V623.0 M234.500 671.2 V683.4 M234.500 301.3 H247 M234.500 321.4 H247 M234.500 341.5 H247 M234.500 381.7 H247 M234.500 401.9 H247 M234.500 422.0 H247 M234.500 522.5 H247 M234.500 542.6 H247 M234.500 562.7 H247 M234.500 582.8 H247 M234.500 623.0 H247 M234.500 683.4 H247 M168 261.1 H180 M192 261.1 H202 M168 442.1 H180 M192 442.1 H202 M168 462.2 H180 M192 462.2 H202 M168 482.3 H180 M192 482.3 H202 M168 643.1 H180 M192 643.1 H202 M192 281.2 H204 M216 281.2 H225 M192 361.6 H204 M216 361.6 H225 M192 502.4 H204 M216 502.4 H225 M192 602.9 H204 M216 602.9 H225 M192 663.2 H204 M216 663.2 H225 M162.500 703.5 H175 M162.500 743.7 H175 M162.500 804.0 H175 M168 723.6 H175 M168 763.8 H175 M168 783.9 H175" stroke="#dedede" stroke-width="1"/>
<rect x="157.5" y="236.0" width="10" height="10" rx="1" fill="#fbfbfb" stroke="#b9b9b9" stroke-width="1"/><path d="M159.7 241.0 h5.600" stroke="#27348b" stroke-width="1.500"/>
<rect x="181.5" y="256.1" width="10" height="10" rx="1" fill="#fbfbfb" stroke="#b9b9b9" stroke-width="1"/><path d="M183.7 261.1 h5.600" stroke="#27348b" stroke-width="1.500"/>
<rect x="181.5" y="477.3" width="10" height="10" rx="1" fill="#fbfbfb" stroke="#b9b9b9" stroke-width="1"/><path d="M183.7 482.3 h5.600" stroke="#27348b" stroke-width="1.500"/>
<rect x="181.5" y="638.1" width="10" height="10" rx="1" fill="#fbfbfb" stroke="#b9b9b9" stroke-width="1"/><path d="M183.7 643.1 h5.600" stroke="#27348b" stroke-width="1.500"/>
<rect x="181.5" y="437.1" width="10" height="10" rx="1" fill="#fbfbfb" stroke="#b9b9b9" stroke-width="1"/><path d="M183.7 442.1 h5.600" stroke="#27348b" stroke-width="1.500"/><path d="M186.5 439.3 v5.600" stroke="#27348b" stroke-width="1.500"/>
<rect x="181.5" y="457.2" width="10" height="10" rx="1" fill="#fbfbfb" stroke="#b9b9b9" stroke-width="1"/><path d="M183.7 462.2 h5.600" stroke="#27348b" stroke-width="1.500"/><path d="M186.5 459.4 v5.600" stroke="#27348b" stroke-width="1.500"/>
<rect x="205.5" y="276.2" width="10" height="10" rx="1" fill="#fbfbfb" stroke="#b9b9b9" stroke-width="1"/><path d="M207.7 281.2 h5.600" stroke="#27348b" stroke-width="1.500"/>
<rect x="205.5" y="356.6" width="10" height="10" rx="1" fill="#fbfbfb" stroke="#b9b9b9" stroke-width="1"/><path d="M207.7 361.6 h5.600" stroke="#27348b" stroke-width="1.500"/>
<rect x="205.5" y="497.4" width="10" height="10" rx="1" fill="#fbfbfb" stroke="#b9b9b9" stroke-width="1"/><path d="M207.7 502.4 h5.600" stroke="#27348b" stroke-width="1.500"/>
<rect x="205.5" y="597.9" width="10" height="10" rx="1" fill="#fbfbfb" stroke="#b9b9b9" stroke-width="1"/><path d="M207.7 602.9 h5.600" stroke="#27348b" stroke-width="1.500"/>
<rect x="205.5" y="658.2" width="10" height="10" rx="1" fill="#fbfbfb" stroke="#b9b9b9" stroke-width="1"/><path d="M207.7 663.2 h5.600" stroke="#27348b" stroke-width="1.500"/>
<rect x="157.5" y="718.6" width="10" height="10" rx="1" fill="#fbfbfb" stroke="#b9b9b9" stroke-width="1"/><path d="M159.7 723.6 h5.600" stroke="#27348b" stroke-width="1.500"/><path d="M162.5 720.8 v5.600" stroke="#27348b" stroke-width="1.500"/>
<rect x="157.5" y="758.8" width="10" height="10" rx="1" fill="#fbfbfb" stroke="#b9b9b9" stroke-width="1"/><path d="M159.7 763.8 h5.600" stroke="#27348b" stroke-width="1.500"/><path d="M162.5 761.0 v5.600" stroke="#27348b" stroke-width="1.500"/>
<rect x="157.5" y="778.9" width="10" height="10" rx="1" fill="#fbfbfb" stroke="#b9b9b9" stroke-width="1"/><path d="M159.7 783.9 h5.600" stroke="#27348b" stroke-width="1.500"/><path d="M162.5 781.1 v5.600" stroke="#27348b" stroke-width="1.500"/>
<g transform="translate(177 232.0)" ><path d="M4 1 H1 V17 H4 M14 1 H17.500 V17 H14" stroke="#3a3a3a" stroke-width="1.500"/><rect x="5" y="4.500" width="8.500" height="8.500" rx="1.500" stroke="#3a3a3a" stroke-width="1.400" fill="#f3f3f3"/><path d="M9 -.5 v3 M9 15.500 v3" stroke="#3a3a3a" stroke-width="1.300"/></g>
<g transform="translate(177 694.461)" ><rect x=".8" y=".8" width="17" height="16.500" rx="1" fill="#f7f7f7" stroke="#555" stroke-width="1.300"/><rect x=".8" y=".8" width="17" height="3.500" fill="#7a7d86"/><rect x="3" y="6.500" width="4" height="3" fill="#8b8e97"/><rect x="3" y="11.500" width="4" height="3" stroke="#555" stroke-width="1"/><path d="M9 8 h6.500 M9 13 h6.500" stroke="#666" stroke-width="1.200"/></g>
<g transform="translate(177 715.068)" ><rect x=".8" y=".8" width="17.500" height="15" fill="#f7f7f7" stroke="#666" stroke-width="1.200"/><rect x=".8" y=".8" width="17.500" height="3.800" fill="#8a8d96"/><path d="M.8 8.300 h17.500 M.8 12 h17.500 M6.500 4.600 V15.800 M12.500 4.600 V15.800" stroke="#9a9a9a" stroke-width="1"/></g>
<g transform="translate(177 734.675)" ><path d="M.8 .8 H13 L17.500 5 V17.500 H.8 Z" fill="#f7f7f7" stroke="#555" stroke-width="1.300"/><path d="M13 .8 V5 H17.500" stroke="#555" stroke-width="1"/><rect x="3" y="7" width="7" height="5" stroke="#666" stroke-width="1.100"/><rect x="11.500" y="12" width="4" height="3.500" fill="#8a8d96"/><path d="M3 14.500 h6" stroke="#666" stroke-width="1.100"/></g>
<g transform="translate(177 754.7819999999999)" ><rect x="1" y="1" width="6" height="6" fill="#f1f2f4" stroke="#444" stroke-width="1.400"/><path d="M10 1 H17.300 V17.300 H1 V10 H10 Z" fill="#e4e6ea" stroke="#444" stroke-width="1.500" stroke-linejoin="miter"/></g>
<g transform="translate(177 774.889)" ><path d="M4 1 H1 V17.500 H4 M14 1 H17.500 V17.500 H14" stroke="#3a3a3a" stroke-width="1.500"/><circle cx="8" cy="8" r="4.500" fill="#dfe3e8" stroke="#555" stroke-width="1.200"/><rect x="7.500" y="7.500" width="7" height="7" rx="1.500" fill="#eef0f3" stroke="#555" stroke-width="1.200"/></g>
<g transform="translate(177 799.496)" ><rect x=".8" y=".8" width="9" height="7.500" rx="3.500" fill="#f2d35a" stroke="#c99a1a" stroke-width="1.500"/><rect x="8.500" y=".8" width="9" height="7.500" rx="3.500" fill="#f2d35a" stroke="#c99a1a" stroke-width="1.500"/><path d="M5.500 4.500 h7.500" stroke="#8a6a10" stroke-width="1.400"/></g>
<path d="M373.500 213 L384 224 M384 213 L373.500 224" stroke="#111" stroke-width="1.900"/>
<g transform="translate(398.5 210)" ><rect x=".8" y=".8" width="12" height="13.500" rx="1" fill="#eef1f6" stroke="#8a8d96" stroke-width="1.200"/><rect x="6" y="3" width="12" height="13.500" rx="1" fill="#f4f6fa" stroke="#8a8d96" stroke-width="1.200"/><path d="M8.500 6 V14 M8.500 6.500 H15.500" stroke="#8a8d96" stroke-width="1" stroke-dasharray="1.500 1.200"/></g>
<path d="M527.500 213.500 L537.500 223.500 M537.500 213.500 L527.500 223.500" stroke="#111" stroke-width="1.800"/>
<path d="M1418.800 215.600 h9.500" stroke="#222" stroke-width="1.500"/><path d="M1418.800 218.700 h9.500 l-4.750 4.600 z" fill="#222"/>
<path d="M1419 245.500 l3.800 -3.800 l3.800 3.800 M1419 967.500 l3.800 3.800 l3.800 -3.800" stroke="#444" stroke-width="1.500"/>
<path d="M804.500 986.500 l-3.600 3.800 l3.600 3.800 M1399.500 986.500 l3.600 3.800 l-3.600 3.800" stroke="#444" stroke-width="1.500"/>
<g fill="#b5b5b5"><rect x="1427" y="986" width="2" height="2"/><rect x="1423.500" y="989.500" width="2" height="2"/><rect x="1427" y="989.500" width="2" height="2"/><rect x="1420" y="993" width="2" height="2"/><rect x="1423.500" y="993" width="2" height="2"/><rect x="1427" y="993" width="2" height="2"/></g>
<g transform="translate(498.5 982.5)" ><rect x=".8" y=".8" width="17.500" height="12.500" rx="1" fill="#e9edf3" stroke="#3a3a3a" stroke-width="1.300"/></g>
<g transform="translate(525 982.5)" ><path d="M1 5.500 L5 1 H18 V9.500 L14 14 H1 Z" fill="#f3f3f3" stroke="#3a3a3a" stroke-width="1.300" stroke-linejoin="round"/><path d="M1 5.500 H14 L18 1 M14 5.500 V14" stroke="#3a3a3a" stroke-width="1.100"/></g>
<g transform="translate(551 981.0)" ><circle cx="8" cy="8" r="4.300" fill="#f7d24a" stroke="#d69a14" stroke-width="1.200"/><path d="M8 0 v2.300 M8 13.700 v2.300 M0 8 h2.300 M13.700 8 h2.300 M2.300 2.300 l1.700 1.700 M12 12 l1.700 1.700 M2.300 13.700 l1.700 -1.700 M12 4 l1.700 -1.700" stroke="#d69a14" stroke-width="1.300"/><path d="M11 9.500 L18 16 M18 9.500 L11 16" stroke="#e0392b" stroke-width="2.300"/></g>
<g transform="translate(581 982.5)" ><circle cx="6.500" cy="5.500" r="5" fill="#d6e8f7" stroke="#3b87cf" stroke-width="1.400"/><path d="M1.500 13.500 H11" stroke="#444" stroke-width="2"/><path d="M9.500 7.500 L16 13.500 M16 7.500 L9.500 13.500" stroke="#e0392b" stroke-width="2.300"/></g>
<g transform="translate(605 982.5)" ><rect x="3.500" y="3" width="12" height="9" fill="#d6e8f7" stroke="#3b87cf" stroke-width="1.400"/><path d="M.5 7.500 H5 M7.500 .5 V4" stroke="#3b87cf" stroke-width="1.600"/><path d="M10 5.500 L17.500 12.500 M17.500 5.500 L10 12.500" stroke="#e0392b" stroke-width="2.300"/></g>
<g transform="translate(632.5 982.5)" ><rect x="3.500" y="3" width="12" height="9" fill="#d6e8f7" stroke="#3b87cf" stroke-width="1.400"/><path d="M.5 7.500 H5 M7.500 .5 V4" stroke="#3b87cf" stroke-width="1.600"/><path d="M14 3 C17 3 17.500 6 16.500 8 L15.500 11 H12.500 L11.500 8 C10.500 6 11 3 14 3 Z" fill="#fff" stroke="#3b87cf" stroke-width="1.100"/></g>
<g transform="translate(660 982.5)" ><path d="M.5 2 L6 9" stroke="#3a3a3a" stroke-width="1.300"/><circle cx="7.500" cy="10" r="3" stroke="#3a3a3a" stroke-width="1.300" fill="#f4f4f4"/><circle cx="14.500" cy="7" r="3" stroke="#3a3a3a" stroke-width="1.300" fill="#f4f4f4"/><path d="M10.500 9.500 L12 8" stroke="#3a3a3a" stroke-width="1.200"/></g>
<g transform="translate(691 983.0)" ><path d="M5 .8 C8 .8 9.300 2.800 9.300 4.800 C9.300 6.800 7.500 7.500 7.500 9.500 H2.500 C2.500 7.500 .7 6.800 .7 4.800 C.7 2.800 2 .8 5 .8 Z" fill="#fbfbfb" stroke="#2f79cf" stroke-width="1.500"/><path d="M3 11.500 h4 M3.500 13.500 h3" stroke="#2f79cf" stroke-width="1.300"/></g>
<g transform="translate(715 983.5)" ><rect x="1" y="2" width="14" height="9.500" stroke="#8e8e8e" stroke-width="1.300" stroke-dasharray="3 2"/><circle cx="13.500" cy="10" r="2.800" stroke="#9a9a9a" stroke-width="1.100" fill="#f0f0f0"/></g>
<g transform="translate(741 983.5)" ><path d="M1 3 H15 M1 12 V3 M15 3 V12" stroke="#b2b2b2" stroke-width="1.300" stroke-dasharray="3 2"/><path d="M5 6 H11 V12 H5 Z M8 6 V12 M5 9 H11" stroke="#b9b9b9" stroke-width="1.100"/></g>
<g transform="translate(767.5 981.5)" ><path d="M1 0 V14 M19.500 0 V6" stroke="#3a3a3a" stroke-width="1.500"/><path d="M1 3.500 H19.500" stroke="#3a3a3a" stroke-width="1.300"/><path d="M1 10 H10" stroke="#777" stroke-width="1" stroke-dasharray="2 1.500"/><rect x="11.500" y="8.500" width="8.500" height="6.500" fill="#555"/><path d="M13.500 8.500 V6.500 C13.500 4.500 18 4.500 18 6.500 V8.500" stroke="#555" stroke-width="1.300"/></g>
<path d="M1753.500 213.500 L1764 224 M1764 213.500 L1753.500 224" stroke="#111" stroke-width="1.900"/>
<defs><linearGradient id="tsg" x1="0" y1="0" x2="0" y2="1"><stop offset="0" stop-color="#fbfbfb"/><stop offset="1" stop-color="#e9e9e9"/></linearGradient><linearGradient id="tib" x1="0" y1="0" x2="1" y2="1"><stop offset="0" stop-color="#e3e3e3"/><stop offset="1" stop-color="#f4f4f4"/></linearGradient></defs>
<rect x="1440" y="232" width="327.500" height="84" fill="url(#tsg)"/>
<rect x="1444.500" y="235.500" width="77" height="77" fill="url(#tib)" stroke="#e0e0e0" stroke-width="1"/>
<path d="M1448 240 H1500 V300 L1448 282 Z" fill="#dcdcdc" fill-opacity=".6"/>
<path d="M1756.75 272.45 h8.5 l-4.25 4.5 z" fill="#9a9a9a"/>
<path d="M1673 327.500 l4 4 l4 -4" stroke="#e2e2e2" stroke-width="1.300"/>
<g transform="translate(1691 323.5)" ><rect x=".5" y=".5" width="8.500" height="9" stroke="#bcbcbc" stroke-width="1"/><path d="M.5 4 h8.500 M4.500 .5 v9" stroke="#c6c6c6" stroke-width="1"/></g>
<path d="M1760.500 347 l2 -2 l2 2 M1760.500 350.5 l2 -2 l2 2" stroke="#444" stroke-width="1"/>
<path d="M1760.500 392 l2 -2 l2 2 M1760.500 395.5 l2 -2 l2 2" stroke="#444" stroke-width="1"/>
<circle cx="1405.400" cy="239.600" r="4.300" fill="#c9c9c9" stroke="#a4a4a4" stroke-width="1"/><path d="M1403.400 237.600 l4 4 m0 -4 l-4 4" stroke="#fff" stroke-width="1.300"/>
<g transform="translate(1380 254)" ><path d="M1.500 13 C1.500 5 5.500 1.500 13 1.500 H25 V14 C25 21 21 25 13 25 C5 25 1.500 21 1.500 13 Z" fill="#ececec" stroke="#9a9a9a" stroke-width="1.500"/><circle cx="12.500" cy="12.500" r="5.500" stroke="#9a9a9a" stroke-width="1.500" fill="#f7f7f7"/><path d="M16.500 16.500 L20 20" stroke="#9a9a9a" stroke-width="1.800"/></g>
<path d="M1391.0 288.0 h6 l-3.0 3.2 z" fill="#8d8d8d"/>
<path d="M1377.500 296.500 H1411" stroke="#dadada" stroke-width="1"/>
<g transform="translate(1383.5 306)" ><path d="M1 1 L15 15 M15 1 L1 15" stroke="#a8a8a8" stroke-width="1.200" stroke-dasharray="3.500 1.800"/><path d="M0 0 h3.500 M0 0 v3.500 M16 0 h-3.500 M16 0 v3.500 M0 16 h3.500 M0 16 v-3.500" stroke="#9a9a9a" stroke-width="1.300"/><rect x="11" y="11" width="6.500" height="6.500" rx="2" fill="#f1f1f1" stroke="#9a9a9a" stroke-width="1.200"/></g>
<path d="M1391.0 336.9 h6 l-3.0 3.2 z" fill="#9a9a9a"/>
<circle cx="1405.300" cy="354" r="3.800" fill="#e4e4e4" stroke="#9a9a9a" stroke-width="1"/><path d="M1403 354 h4.600" stroke="#8a8a8a" stroke-width="1.100"/>
</svg>
<div class="tl">
<span class="t " style="left:1298px;top:13.3px;font-size:38px;font-weight:700;color:#ffffff;transform:scaleX(0.937);letter-spacing:5.3px;">階段の中心の補助線を書きます</span>
<span class="t " style="left:800px;top:6.8px;font-size:13.5px;color:#292929;transform:scaleX(1.026);">Autodesk Revit 2020.2 - 二上Exercise0307(2015) - 平面図: 1階平面図</span>
<span class="t " style="left:163px;top:41.0px;font-size:14px;font-weight:400;color:#ffffff;transform:scaleX(0.696);">ファイル</span>
<span class="t " style="left:228px;top:41.0px;font-size:14px;color:#3b3b3b;">建築</span>
<span class="t " style="left:280px;top:41.0px;font-size:14px;color:#3b3b3b;">構造</span>
<span class="t " style="left:332px;top:41.0px;font-size:14px;color:#3b3b3b;">鉄骨</span>
<span class="t " style="left:384px;top:41.0px;font-size:14px;color:#3b3b3b;">設備</span>
<span class="t " style="left:436px;top:41.0px;font-size:14px;color:#3b3b3b;">挿入</span>
<span class="t " style="left:488px;top:41.0px;font-size:14px;color:#3b3b3b;">注釈</span>
<span class="t " style="left:540px;top:41.0px;font-size:14px;color:#3b3b3b;">解析</span>
<span class="t " style="left:592px;top:41.0px;font-size:14px;color:#3b3b3b;transform:scaleX(0.944);">マス &amp; 外構</span>
<span class="t " style="left:685px;top:41.0px;font-size:14px;color:#3b3b3b;transform:scaleX(0.726);">コラボレート</span>
<span class="t " style="left:770px;top:41.0px;font-size:14px;color:#3b3b3b;">表示</span>
<span class="t " style="left:822px;top:41.0px;font-size:14px;color:#3b3b3b;">管理</span>
<span class="t " style="left:874px;top:41.0px;font-size:14px;color:#3b3b3b;transform:scaleX(0.750);">アドイン</span>
<span class="t " style="left:941px;top:41.0px;font-size:14px;color:#3b3b3b;transform:scaleX(1.017);">Twinmotion</span>
<span class="t " style="left:1038px;top:41.0px;font-size:14px;color:#3b3b3b;transform:scaleX(1.015);">修正 | 配置 参照面</span>
<span class="t " style="left:159px;top:153.5px;font-size:14px;color:#3b3b3b;">選択</span>
<span class="t " style="left:217px;top:153.5px;font-size:14px;color:#3b3b3b;transform:scaleX(0.737);">プロパティ</span>
<span class="t " style="left:294px;top:153.5px;font-size:14px;color:#3b3b3b;transform:scaleX(0.724);">クリップボード</span>
<span class="t " style="left:449px;top:153.5px;font-size:14px;color:#3b3b3b;transform:scaleX(0.714);">ジオメトリ</span>
<span class="t " style="left:692px;top:153.5px;font-size:14px;color:#3b3b3b;transform:scaleX(0.929);">修正</span>
<span class="t " style="left:871px;top:153.5px;font-size:14px;color:#3b3b3b;transform:scaleX(0.964);">表示</span>
<span class="t " style="left:942px;top:153.5px;font-size:14px;color:#3b3b3b;transform:scaleX(0.964);">計測</span>
<span class="t " style="left:1024px;top:153.5px;font-size:14px;color:#3b3b3b;transform:scaleX(0.964);">作成</span>
<span class="t " style="left:1154px;top:153.5px;font-size:14px;color:#3b3b3b;transform:scaleX(0.964);">描画</span>
<span class="t " style="left:1305px;top:153.5px;font-size:14px;color:#3b3b3b;transform:scaleX(0.750);">サブカテゴリ</span>
<span class="t " style="left:168px;top:111.0px;font-size:14px;color:#404040;transform:scaleX(0.964);">修正</span>
<span class="t " style="left:290px;top:111.0px;font-size:14px;color:#acacac;transform:scaleX(0.857);">貼り付け</span>
<span class="t " style="left:419px;top:70.0px;font-size:14px;color:#353535;transform:scaleX(0.929);">切欠き</span>
<span class="t " style="left:419px;top:98.5px;font-size:14px;color:#353535;transform:scaleX(0.839);">切り取り</span>
<span class="t " style="left:419px;top:127.0px;font-size:14px;color:#353535;transform:scaleX(0.964);">接合</span>
<span class="t " style="left:1271px;top:84.5px;font-size:14px;color:#353535;transform:scaleX(0.774);">サブカテゴリ:</span>
<span class="t " style="left:1255px;top:111.0px;font-size:13px;color:#808080;transform:scaleX(0.947);">&lt;なし&gt;</span>
<span class="t " style="left:162px;top:182.0px;font-size:14px;color:#555;transform:scaleX(1.006);">修正 | 配置 参照面</span>
<span class="t " style="left:326px;top:182.2px;font-size:13.5px;color:#292929;transform:scaleX(0.772);">オフセット:</span>
<span class="t " style="left:389px;top:181.0px;font-size:13px;color:#333;transform:scaleX(1.014);">700.0</span>
<span class="t " style="left:155.9px;top:212.3px;font-size:14px;color:#444;transform:scaleX(0.733);">プロジェクト ブラウザ</span>
<span class="t " style="left:269.1px;top:212.3px;font-size:14px;color:#444;transform:scaleX(0.939);">- 二上Exercise...</span>
<span class="t " style="left:199px;top:234.0px;font-size:14px;color:#2d2d2d;transform:scaleX(0.864);">ビュー (分類順)</span>
<span class="t " style="left:205px;top:254.1px;font-size:14px;color:#2d2d2d;transform:scaleX(0.976);">平面図</span>
<span class="t " style="left:228px;top:274.2px;font-size:14px;color:#2d2d2d;">作業用</span>
<span class="t " style="left:251px;top:294.3px;font-size:14px;color:#2d2d2d;transform:scaleX(0.870);">2FL</span>
<span class="t " style="left:251px;top:314.4px;font-size:14px;color:#2d2d2d;transform:scaleX(0.870);">1FL</span>
<span class="t " style="left:251px;top:334.5px;font-size:14px;color:#2d2d2d;transform:scaleX(0.964);">設計GL</span>
<span class="t " style="left:228px;top:354.6px;font-size:14px;color:#2d2d2d;">図面用</span>
<span class="t " style="left:251px;top:374.7px;font-size:14px;color:#2d2d2d;transform:scaleX(1.019);">2階平面図</span>
<span class="t " style="left:251px;top:394.9px;font-size:14px;color:#2d2d2d;transform:scaleX(1.013);">1階平面詳細図</span>
<span class="t " style="left:205px;top:435.1px;font-size:14px;color:#2d2d2d;transform:scaleX(0.982);">天井伏図</span>
<span class="t " style="left:205px;top:455.2px;font-size:14px;color:#2d2d2d;transform:scaleX(0.768);">3D ビュー</span>
<span class="t " style="left:205px;top:475.3px;font-size:14px;color:#2d2d2d;transform:scaleX(0.985);">立面図 (立面)</span>
<span class="t " style="left:228px;top:495.4px;font-size:14px;color:#2d2d2d;">作業用</span>
<span class="t " style="left:251px;top:515.5px;font-size:14px;color:#2d2d2d;">西</span>
<span class="t " style="left:251px;top:535.6px;font-size:14px;color:#2d2d2d;">東</span>
<span class="t " style="left:251px;top:555.7px;font-size:14px;color:#2d2d2d;">南</span>
<span class="t " style="left:251px;top:575.8px;font-size:14px;color:#2d2d2d;">北</span>
<span class="t " style="left:228px;top:595.9px;font-size:14px;color:#2d2d2d;">図面用</span>
<span class="t " style="left:251px;top:616.0px;font-size:14px;color:#2d2d2d;">北面</span>
<span class="t " style="left:205px;top:636.1px;font-size:14px;color:#2d2d2d;transform:scaleX(0.863);">製図ビュー (詳細)</span>
<span class="t " style="left:228px;top:656.2px;font-size:14px;color:#2d2d2d;">作業用</span>
<span class="t " style="left:251px;top:676.4px;font-size:14px;color:#2d2d2d;">方位記号</span>
<span class="t " style="left:199px;top:696.5px;font-size:14px;color:#2d2d2d;">凡例</span>
<span class="t " style="left:199px;top:716.6px;font-size:14px;color:#2d2d2d;transform:scaleX(0.964);">集計表/数量 (すべて)</span>
<span class="t " style="left:199px;top:736.7px;font-size:14px;color:#2d2d2d;transform:scaleX(0.805);">シート (すべて)</span>
<span class="t " style="left:199px;top:756.8px;font-size:14px;color:#2d2d2d;transform:scaleX(0.679);">ファミリ</span>
<span class="t " style="left:199px;top:776.9px;font-size:14px;color:#2d2d2d;transform:scaleX(0.761);">グループ</span>
<span class="t " style="left:199px;top:797.0px;font-size:14px;color:#2d2d2d;transform:scaleX(0.861);">Revit リンク</span>
<span class="t " style="left:251px;top:415.0px;font-size:14px;font-weight:700;color:#111;transform:scaleX(0.988);">1階平面図</span>
<span class="t " style="left:426px;top:211.5px;font-size:14px;color:#333;transform:scaleX(0.972);">1階平面図</span>
<span class="t " style="left:427.5px;top:983.8px;font-size:13.5px;color:#333;transform:scaleX(0.969);">1 : 100</span>
<span class="t " style="left:1443px;top:211.5px;font-size:14px;color:#444;transform:scaleX(0.737);">プロパティ</span>
<span class="t " style="left:1442px;top:322.8px;font-size:14.5px;color:#919191;transform:scaleX(0.912);">新しい 参照面</span>
<span class="t " style="left:1704.5px;top:321.8px;font-size:14.5px;color:#afafaf;transform:scaleX(0.800);">タイプ編集</span>
<span class="t " style="left:1442px;top:346.6px;font-size:14px;color:#2d2d2d;transform:scaleX(0.982);">範囲</span>
<span class="t " style="left:1450px;top:368.0px;font-size:14px;color:#2d2d2d;transform:scaleX(0.755);">スコープ ボックス</span>
<span class="t " style="left:1599px;top:368.0px;font-size:14px;color:#2d2d2d;transform:scaleX(0.768);">なし</span>
<span class="t " style="left:1442px;top:391.7px;font-size:14px;color:#2d2d2d;transform:scaleX(0.991);">識別情報</span>
<span class="t " style="left:1450px;top:413.5px;font-size:14px;color:#2d2d2d;transform:scaleX(0.759);">サブカテゴリ</span>
<span class="t " style="left:1599.7px;top:413.5px;font-size:14px;color:#2d2d2d;transform:scaleX(0.863);">&lt;なし&gt;</span>
<span class="t " style="left:1442px;top:977.5px;font-size:14px;font-weight:400;color:#1d62c4;transform:scaleX(0.773);text-decoration:underline;">プロパティ ヘルプ</span>
<span class="t " style="left:1706px;top:980.5px;font-size:14px;color:#929292;transform:scaleX(0.964);">適用</span>
<span class="t " style="left:152.3px;top:1011.0px;font-size:14px;color:#444;transform:scaleX(0.965);">水平 と [壁 : 標準壁 : 外壁-RCt150].</span>
<span class="t " style="left:377.8px;top:1011.0px;font-size:14px;color:#444;transform:scaleX(0.818);">[スペース]キーを押すとオフセットの方向が切り替わります。</span>
<span class="t " style="left:984px;top:1013.5px;font-size:13px;color:#444;transform:scaleX(0.922);">:0</span>
<span class="t " style="left:1061px;top:1009.2px;font-size:13.5px;color:#808080;transform:scaleX(0.802);">メイン モデル</span>
<span class="t " style="left:1718px;top:1012.0px;font-size:14px;color:#555;transform:scaleX(0.856);">:0</span>
<span class="t " style="left:1647.5px;top:1039.0px;font-size:14px;font-weight:500;color:#ffffff;transform:scaleX(0.926);">13:11</span>
<span class="t " style="left:1627.5px;top:1061.0px;font-size:14px;font-weight:500;color:#ffffff;transform:scaleX(1.020);">2020/03/28</span>
<span class="t " style="left:1600px;top:1045.0px;font-size:24px;font-weight:400;color:#ffffff;transform:scaleX(0.843);">A</span>
<span class="t " style="left:159px;top:2.5px;font-size:27px;font-weight:700;color:#1a63ad;transform:scaleX(0.872);text-shadow:1px 1px 0 #0b3567;">R</span>
<span class="t " style="left:456.5px;top:5.5px;font-size:22px;font-weight:700;color:#333;transform:scaleX(0.975);">A</span>
<span class="t " style="left:403.5px;top:1041.0px;font-size:31px;font-weight:700;color:#1c5fa8;transform:scaleX(0.715);">R</span>
<span class="t ovt" style="left:1731px;top:1057.8px;font-size:13.5px;font-weight:700;color:#ffffff;transform:scaleX(1.064);">24</span>
<span class="t ovt" style="left:1464px;top:235.0px;font-size:70px;font-weight:700;color:#a3a3a3;transform:scaleX(0.850);text-shadow:2px 1px 0 #8f8f8f;">R</span>
<span class="t ovt" style="left:1396.5px;top:270.5px;font-size:10px;font-weight:700;color:#5f93cc;transform:scaleX(0.899);">2D</span>
<span class="t " style="left:436.7px;top:9.8px;font-size:9px;font-weight:700;color:#222;">1</span>
<span class="t " style="left:703.7px;top:471.8px;font-size:60px;font-weight:500;color:#fb1a10;">参照面</span>
<span class="t " style="left:642.15px;top:468.9px;font-size:60.5px;font-weight:400;color:#fb1a10;font-family:IPAGothic,sans-serif;">↓</span>
<span class="t ovt" style="left:397.25px;top:549.1px;font-size:60.3px;font-weight:700;color:#fb1a10;">④</span>
<span class="t ovt" style="left:1054.35px;top:549.1px;font-size:60.3px;font-weight:700;color:#fb1a10;">⑤</span>
<span class="t " style="left:1090px;top:679.3px;font-size:14px;color:#808080;transform:scaleX(0.948);">水平 と 近接点</span>
</div>
<svg class="ov" width="1920" height="1080" viewBox="0 0 1920 1080" fill="none" stroke="#fb1a10">
<circle cx="426" cy="659.800" r="36.200" stroke-width="10.500"/>
<circle cx="1084.800" cy="659.800" r="36.200" stroke-width="10.500"/>
</svg>
</body></html>
